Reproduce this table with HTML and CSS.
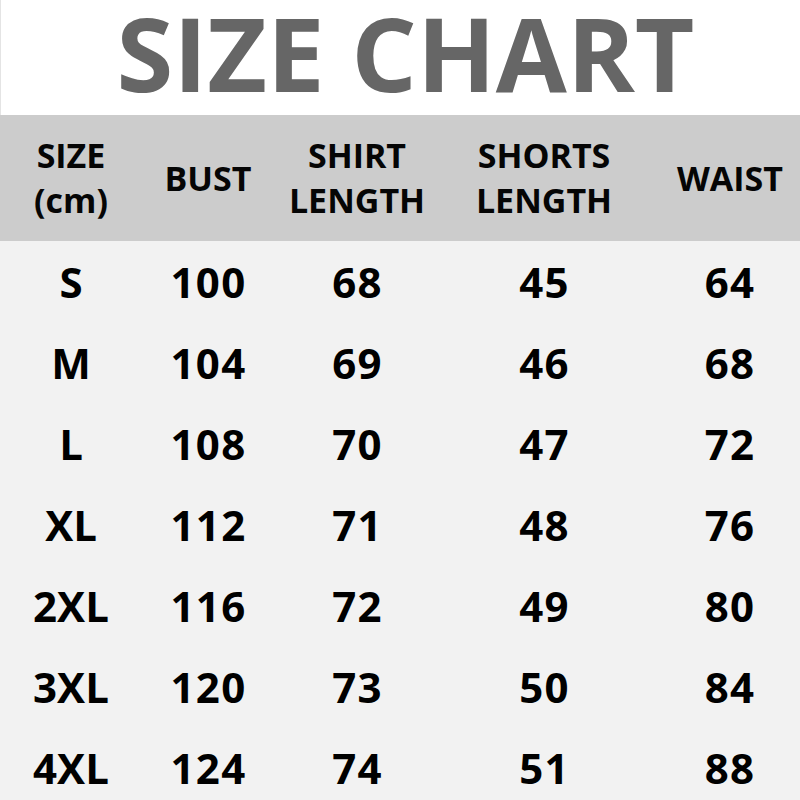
FILE: index.html
```html
<!DOCTYPE html>
<html>
<head>
<meta charset="utf-8">
<link rel="stylesheet" href="styles.css">
</head>
<body>
<div class="page">
  <h1 class="title">SIZE CHART</h1>
  <div class="table">
    <div class="row head">
      <div class="cell">SIZE<br>(cm)</div>
      <div class="cell">BUST</div>
      <div class="cell">SHIRT<br>LENGTH</div>
      <div class="cell">SHORTS<br>LENGTH</div>
      <div class="cell last">WAIST</div>
    </div>
    <div class="body">
      <div class="row"><div class="cell">S</div><div class="cell num">100</div><div class="cell num">68</div><div class="cell num">45</div><div class="cell num last">64</div></div>
      <div class="row"><div class="cell">M</div><div class="cell num">104</div><div class="cell num">69</div><div class="cell num">46</div><div class="cell num last">68</div></div>
      <div class="row"><div class="cell">L</div><div class="cell num">108</div><div class="cell num">70</div><div class="cell num">47</div><div class="cell num last">72</div></div>
      <div class="row"><div class="cell">XL</div><div class="cell num">112</div><div class="cell num">71</div><div class="cell num">48</div><div class="cell num last">76</div></div>
      <div class="row"><div class="cell">2XL</div><div class="cell num">116</div><div class="cell num">72</div><div class="cell num">49</div><div class="cell num last">80</div></div>
      <div class="row"><div class="cell">3XL</div><div class="cell num">120</div><div class="cell num">73</div><div class="cell num">50</div><div class="cell num last">84</div></div>
      <div class="row"><div class="cell">4XL</div><div class="cell num">124</div><div class="cell num">74</div><div class="cell num">51</div><div class="cell num last">88</div></div>
    </div>
  </div>
</div>
</body>
</html>
```

FILE: styles.css
```css
html, body {
  margin: 0;
  padding: 0;
  background: #f2f2f2;
}
.page {
  width: 800px;
  height: 800px;
  overflow: hidden;
  font-family: "Open Sans", "DejaVu Sans", sans-serif;
  font-weight: 700;
  color: #000;
  background: #f2f2f2;
}
.title {
  margin: 0;
  height: 115px;
  box-sizing: border-box;
  background: #fff;
  border-left: 1px solid #e4e4e4;
  color: #666666;
  font-size: 103px;
  line-height: 104px;
  text-align: center;
  font-weight: 700;
  padding-left: 10px;
}
.row {
  display: grid;
  grid-template-columns: 142px 132px 166px 208px 152px;
  align-items: center;
  height: 81px;
}
.row.head {
  height: 126px;
  background: #cccccc;
  font-size: 34px;
  line-height: 45px;
  color: #050505;
}
.body .row {
  font-size: 42px;
  line-height: 50px;
}
.cell {
  text-align: center;
}
.cell.num {
  letter-spacing: 1.3px;
  padding-left: 1px;
}
.cell.last {
  padding-left: 12px;
}
```
